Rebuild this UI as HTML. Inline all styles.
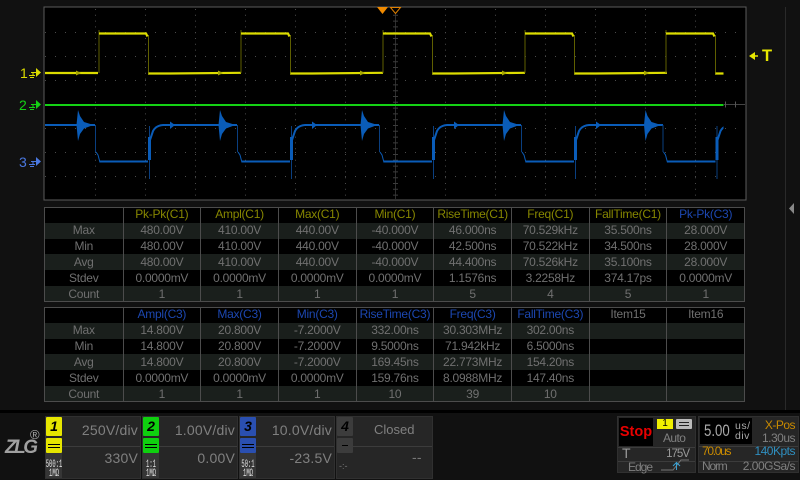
<!DOCTYPE html>
<html><head><meta charset="utf-8"><style>
html,body{margin:0;padding:0;background:#111}
body{width:800px;height:480px;position:relative;overflow:hidden;font-family:"Liberation Sans",sans-serif}
.a{position:absolute;white-space:nowrap}
table{position:absolute;left:44px;width:701px;height:95px;border-collapse:collapse;table-layout:fixed;background:#000;font-size:12px;letter-spacing:-.25px;color:#707070;text-align:center}
td{border-left:1px solid #4c4c4c;border-right:1px solid #4c4c4c;padding:0;line-height:15px;overflow:hidden;white-space:nowrap}
table{outline:1.5px solid #4c4c4c;outline-offset:-1px}
tr.g td{background:#1a1f1c}
tr{height:15.8px}
.y tr:first-child td{color:#878700}.b tr:first-child td{color:#1c47b0}
.pn{position:absolute;background:#262626;border:1px solid #303030;box-sizing:border-box}
.bd{position:absolute;width:16px;height:19px;border-radius:1px;color:#000;font:italic bold 14px/19px "Liberation Sans",sans-serif;text-align:center}
.bd2{position:absolute;width:16px;height:15px;border-radius:1px;}
.bd2 i{position:absolute;left:2px;right:2px;height:1px;background:#000}
.pr{position:absolute;width:16px;height:25px;background:#363636;overflow:hidden}
.pr div{position:absolute;left:-9px;top:8px;width:34px;color:#e4e4e4;font:11px/9px "Liberation Mono",monospace;text-align:center;transform:scaleX(.5)}
.t{position:absolute;color:#808080;white-space:nowrap;font-size:14px;letter-spacing:.2px;line-height:16px}
.ln{position:absolute;height:1px;background:#3c3c3c}
.s{position:absolute;white-space:nowrap;font-size:12px;letter-spacing:-.5px;line-height:14px;color:#808080}
</style></head><body>

<svg class="a" style="left:0;top:0" width="800" height="410" viewBox="0 0 800 410">
<defs>
<clipPath id="c"><rect x="45" y="8" width="678.500" height="191"/></clipPath>
<g id="yp" fill="none">
<path d="M99 73V30M148.500 35V75" stroke="#5f5f00" stroke-width="1"/>
<path d="M99 33.500H146L147.500 36.500" stroke="#dcdc00" stroke-width="2.200"/>
<path d="M148.500 73.500H170L241 72.800" stroke="#dcdc00" stroke-width="2.200"/>
<path d="M218 70.500V75.500L223 73Z" fill="#a8a800"/>
</g>
<g id="bp">
<path d="M76.500 125L78 110L80 116L84 122L92 124.500V125.500L84 128.500L80 134L78 141Z" fill="#0a5cb8"/>
<path d="M95.500 125V152" stroke="#0a3f80" stroke-width="1" fill="none"/>
<path d="M96 152L98 155L100 162.500" stroke="#0a5cb8" stroke-width="1" fill="none"/>
<path d="M100 161.500H148" stroke="#0a5cb8" stroke-width="2" fill="none"/>
<path d="M149.500 126V179" stroke="#0a3f80" stroke-width="1" fill="none"/>
<path d="M149.500 160V137" stroke="#0a5cb8" stroke-width="3" fill="none"/>
<path d="M150 140L153 131Q156 125.500 163 125H237" stroke="#0a5cb8" stroke-width="2" fill="none"/>
<path d="M170 121.500V129L175 125Z" fill="#0a5cb8"/>
</g>
</defs>
<rect x="44" y="7" width="702" height="193" fill="#000" stroke="#5c5c5c" stroke-width="1"/>
<path d="M45 32.500H745M45 56.500H745M45 80.500H745M45 128.500H745M45 152.500H745M45 176.500H745" stroke="#4a4a4a" stroke-dasharray="1 9"/>
<path d="M95.500 9V199M145.500 9V199M195.500 9V199M245.500 9V199M295.500 9V199M345.500 9V199M445.500 9V199M495.500 9V199M545.500 9V199M595.500 9V199M645.500 9V199M695.500 9V199" stroke="#4a4a4a" stroke-dasharray="1 4.800"/>
<path d="M395.500 8V199" stroke="#2e2e2e"/>
<path d="M395.500 9V199" stroke="#3c3c3c" stroke-width="5" stroke-dasharray="1 4.800"/>
<path d="M724 104.500H745" stroke="#444"/>
<path d="M725 104.500H745" stroke="#555" stroke-width="6" stroke-dasharray="1 9"/>
<g clip-path="url(#c)">
<path d="M45 73H98" stroke="#dcdc00" stroke-width="2.200"/>
<path d="M76 70.500V75.500L81 73Z" fill="#a8a800"/>
<use href="#yp"/><use href="#yp" x="142"/><use href="#yp" x="284"/><use href="#yp" x="426"/><use href="#yp" x="567"/>
<path d="M45 105H723.500" stroke="#14d214" stroke-width="2"/>
<path d="M45 125H95" stroke="#0a5cb8" stroke-width="2"/>
<use href="#bp"/><use href="#bp" x="142"/><use href="#bp" x="284"/><use href="#bp" x="426"/><use href="#bp" x="567.500"/>
</g>
<path d="M377 7H388L382.500 14Z" fill="#f08a00"/>
<path d="M390.500 7.500H400.500L395.500 13.500Z" fill="#000" stroke="#e08000"/>

<path d="M36 68V77L41 72.500Z" fill="#dcdc00"/><path d="M31 72.500H36M33 72.500V75.500M29 75.500H35M30 77.500H34" stroke="#dcdc00" fill="none"/>
<path d="M36 100V109L41 104.500Z" fill="#14d214"/><path d="M31 104.500H36M33 104.500V107.500M29 107.500H35M30 109.500H34" stroke="#14d214" fill="none"/>
<path d="M36 157V166L41 161.500Z" fill="#4a78e0"/><path d="M31 161.500H36M33 161.500V164.500M29 164.500H35M30 166.500H34" stroke="#4a78e0" fill="none"/>
<path d="M749 56L755 52V60Z" fill="#e6e600"/><path d="M754 56H758" stroke="#e6e600" stroke-width="1.500"/>
<path d="M785.500 7V410" stroke="#2a2a2a"/>
<path d="M794 203V214L789 208.500Z" fill="#888"/>
</svg>
<div class="a" style="left:20px;top:65px;color:#dcdc00;font-size:14px;line-height:16px">1</div>
<div class="a" style="left:19px;top:97px;color:#14d214;font-size:14px;line-height:16px">2</div>
<div class="a" style="left:19px;top:154px;color:#4a78e0;font-size:14px;line-height:16px">3</div>
<div class="a" style="left:762px;top:48px;color:#e6e600;font:bold 16.500px/17px 'Liberation Sans',sans-serif">T</div>

<table class="y" style="top:207px"><colgroup><col style="width:78.500px"><col span="8"></colgroup>
<tr><td></td><td>Pk-Pk(C1)</td><td>Ampl(C1)</td><td>Max(C1)</td><td>Min(C1)</td><td>RiseTime(C1)</td><td>Freq(C1)</td><td>FallTime(C1)</td><td style="color:#1c47b0">Pk-Pk(C3)</td></tr>
<tr class="g"><td>Max</td><td>480.00V</td><td>410.00V</td><td>440.00V</td><td>-40.000V</td><td>46.000ns</td><td>70.529kHz</td><td>35.500ns</td><td>28.000V</td></tr>
<tr><td>Min</td><td>480.00V</td><td>410.00V</td><td>440.00V</td><td>-40.000V</td><td>42.500ns</td><td>70.522kHz</td><td>34.500ns</td><td>28.000V</td></tr>
<tr class="g"><td>Avg</td><td>480.00V</td><td>410.00V</td><td>440.00V</td><td>-40.000V</td><td>44.400ns</td><td>70.526kHz</td><td>35.100ns</td><td>28.000V</td></tr>
<tr><td>Stdev</td><td>0.0000mV</td><td>0.0000mV</td><td>0.0000mV</td><td>0.0000mV</td><td>1.1576ns</td><td>3.2258Hz</td><td>374.17ps</td><td>0.0000mV</td></tr>
<tr class="g"><td>Count</td><td>1</td><td>1</td><td>1</td><td>1</td><td>5</td><td>4</td><td>5</td><td>1</td></tr>
</table>
<table style="top:307px" class="b"><colgroup><col style="width:78.500px"><col span="8"></colgroup>
<tr><td></td><td>Ampl(C3)</td><td>Max(C3)</td><td>Min(C3)</td><td>RiseTime(C3)</td><td>Freq(C3)</td><td>FallTime(C3)</td><td style="color:#707070">Item15</td><td style="color:#707070">Item16</td></tr>
<tr class="g"><td>Max</td><td>14.800V</td><td>20.800V</td><td>-7.2000V</td><td>332.00ns</td><td>30.303MHz</td><td>302.00ns</td><td></td><td></td></tr>
<tr><td>Min</td><td>14.800V</td><td>20.800V</td><td>-7.2000V</td><td>9.5000ns</td><td>71.942kHz</td><td>6.5000ns</td><td></td><td></td></tr>
<tr class="g"><td>Avg</td><td>14.800V</td><td>20.800V</td><td>-7.2000V</td><td>169.45ns</td><td>22.773MHz</td><td>154.20ns</td><td></td><td></td></tr>
<tr><td>Stdev</td><td>0.0000mV</td><td>0.0000mV</td><td>0.0000mV</td><td>159.76ns</td><td>8.0988MHz</td><td>147.40ns</td><td></td><td></td></tr>
<tr class="g"><td>Count</td><td>1</td><td>1</td><td>1</td><td>10</td><td>39</td><td>10</td><td></td><td></td></tr>
</table>

<div class="a" style="left:0;top:410px;width:800px;height:3px;background:#000"></div>
<div class="a" style="left:5px;top:438px;color:#a0a0a0;font:italic bold 19px/20px 'Liberation Sans',sans-serif;letter-spacing:-2.500px">ZLG</div>
<div class="a" style="left:30px;top:428px;color:#aaa;font-size:13px;line-height:14px">®</div>

<!-- channel 1 -->
<div class="pn" style="left:45px;top:416px;width:96px;height:63px"></div>
<div class="ln" style="left:62px;top:446px;width:78px"></div>
<div class="pr" style="left:46px;top:453px"><div>500:1<br>1MΩ</div></div>
<div class="bd" style="left:46px;top:417px;background:#e6e600">1</div>
<div class="bd2" style="left:46px;top:438px;background:#e6e600"><i style="top:6px"></i><i style="top:9px"></i></div>
<div class="t" style="right:662px;top:422px">250V/div</div><div class="t" style="right:662px;top:450px">330V</div>
<!-- channel 2 -->
<div class="pn" style="left:142px;top:416px;width:96px;height:63px"></div>
<div class="ln" style="left:159px;top:446px;width:78px"></div>
<div class="pr" style="left:143px;top:453px"><div>1:1<br>1MΩ</div></div>
<div class="bd" style="left:143px;top:417px;background:#0fd00f">2</div>
<div class="bd2" style="left:143px;top:438px;background:#0fd00f"><i style="top:6px"></i><i style="top:9px"></i></div>
<div class="t" style="right:565px;top:422px">1.00V/div</div><div class="t" style="right:565px;top:450px">0.00V</div>
<!-- channel 3 -->
<div class="pn" style="left:239px;top:416px;width:96px;height:63px"></div>
<div class="ln" style="left:256px;top:446px;width:78px"></div>
<div class="pr" style="left:240px;top:453px"><div>50:1<br>1MΩ</div></div>
<div class="bd" style="left:240px;top:417px;background:#2a4fb0">3</div>
<div class="bd2" style="left:240px;top:438px;background:#2a4fb0"><i style="top:6px"></i><i style="top:9px"></i></div>
<div class="t" style="right:468px;top:422px">10.0V/div</div><div class="t" style="right:468px;top:450px">-23.5V</div>
<!-- channel 4 -->
<div class="pn" style="left:336px;top:416px;width:97px;height:63px"></div>
<div class="ln" style="left:353px;top:446px;width:79px"></div>
<div class="bd" style="left:337px;top:417px;background:#3c3c3c">4</div>
<div class="bd2" style="left:337px;top:438px;background:#3c3c3c"><i style="top:7px;left:5px;right:5px"></i></div>
<div class="a" style="left:339px;top:461px;color:#777;font-size:9px;line-height:10px">-:-</div>
<div class="t" style="left:374px;top:422px;color:#808080;font-size:13px;letter-spacing:0">Closed</div><div class="t" style="left:412px;top:449px;color:#777">--</div>

<!-- trigger -->
<div class="pn" style="left:617px;top:416px;width:79px;height:57px"></div>
<div class="a" style="left:619px;top:418px;width:34px;height:28px;background:#000;color:#e80000;font:bold 14.500px/28px 'Liberation Sans',sans-serif;text-align:center">Stop</div>
<div class="a" style="left:657px;top:419px;width:16px;height:10px;background:#f0f000;color:#000;font-size:10px;line-height:10px;text-align:center">1</div>
<div class="a" style="left:676px;top:419px;width:16px;height:10px;background:#bbb;border-radius:1px"><div class="a" style="left:3px;top:3px;width:10px;height:1px;background:#222"></div><div class="a" style="left:3px;top:6px;width:10px;height:1px;background:#222"></div></div>
<div class="s" style="left:663px;top:431px;letter-spacing:-.6px">Auto</div>
<div class="ln" style="left:618px;top:447px;width:77px"></div>
<div class="ln" style="left:618px;top:461px;width:77px"></div>
<div class="s" style="left:622px;top:446px;font-size:14px;letter-spacing:0;color:#999">T</div>
<div class="s" style="right:111px;top:447px;color:#999;font-size:11.500px;letter-spacing:-1px">175V</div>
<div class="s" style="left:628px;top:460px;letter-spacing:-1px">Edge</div>
<svg class="a" style="left:660px;top:459px" width="30" height="13"><path d="M1 11H13L21 1H29" fill="none" stroke="#777"/><path d="M13 7L16.500 3.500L20 7M16.500 4V11" fill="none" stroke="#3aa0d0"/></svg>

<!-- timebase -->
<div class="pn" style="left:698px;top:416px;width:101px;height:57px"></div>
<div class="a" style="left:700px;top:418px;width:52px;height:26px;background:#000"></div>
<div class="a" style="left:704px;top:419px;color:#aaa;font-size:17px;line-height:24px;transform:scaleX(.78);transform-origin:left">5.00</div>
<div class="a" style="left:735px;top:422px;color:#aaa;font-size:10.500px;line-height:9.500px;letter-spacing:.5px">us/<br>div</div>
<div class="s" style="right:5px;top:418px;color:#c88a00">X-Pos</div>
<div class="s" style="right:5px;top:431px">1.30us</div>
<div class="ln" style="left:699px;top:446px;width:99px"></div>
<div class="ln" style="left:699px;top:461px;width:99px"></div>
<div class="s" style="left:702px;top:444px;color:#c88a00;letter-spacing:-1.300px">70.0us</div>
<div class="s" style="right:5px;top:444px;color:#2f8fc0">140Kpts</div>
<div class="s" style="left:702px;top:459px;letter-spacing:-1.200px">Norm</div>
<div class="s" style="right:5px;top:459px">2.00GSa/s</div>
</body></html>
